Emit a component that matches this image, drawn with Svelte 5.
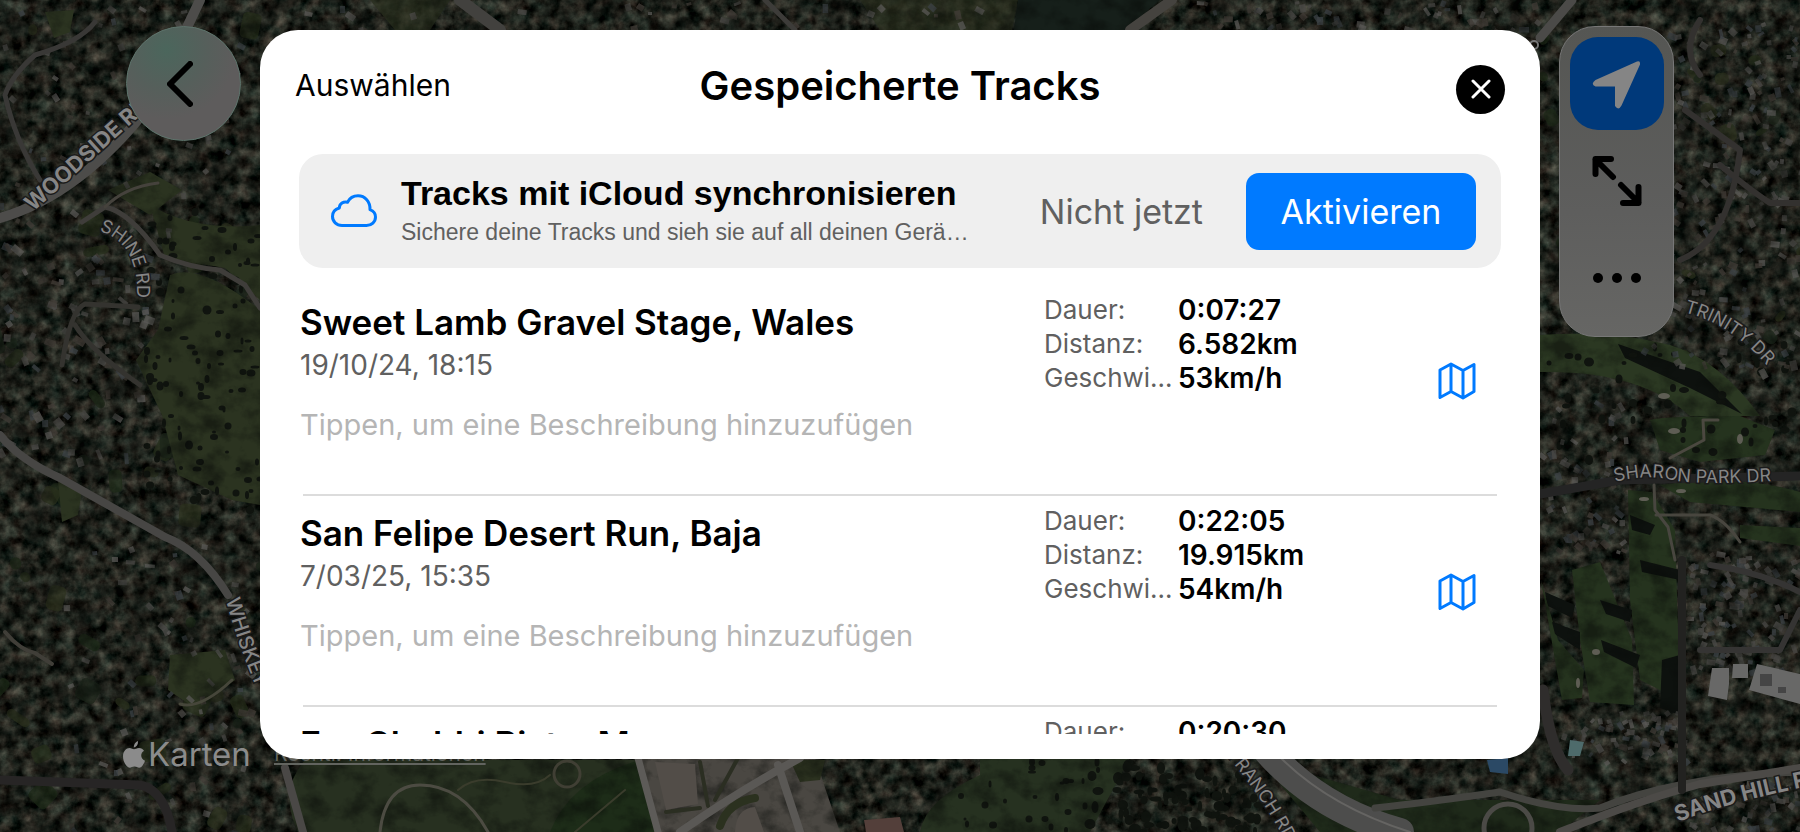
<script>
  const tracks = [
    { name: 'Sweet Lamb Gravel Stage, Wales', date: '19/10/24, 18:15', duration: '0:07:27', distance: '6.582km', speed: '53km/h' },
    { name: 'San Felipe Desert Run, Baja', date: '7/03/25, 15:35', duration: '0:22:05', distance: '19.915km', speed: '54km/h' },
    { name: 'Erg Chebbi Piste, Morocco', date: '2/04/25, 10:12', duration: '0:20:30', distance: '18.240km', speed: '53km/h' },
  ];

  let notes = $state(tracks.map(() => ''));

  // Small seeded generator, so the map looks the same on every load
  let seed = 41;
  function rand(min = 0, max = 1) {
    seed = (seed * 16807) % 2147483647;
    return min + (seed / 2147483647) * (max - min);
  }

  function scatter(count, x, y, w, h, min, max) {
    return Array.from({ length: count }, () => ({
      x: Math.round(rand(x, x + w)),
      y: Math.round(rand(y, y + h)),
      w: Math.round(rand(min, max)),
      h: Math.round(rand(min, max)),
      turn: Math.round(rand(0, 90)),
      tone: Math.floor(rand(0, 4)),
    }));
  }

  const roofs = ['#4b4947', '#5a5856', '#423c37', '#3c4145'];
  const lawns = ['#1d2a17', '#252e19', '#2b301d', '#1b2519'];

  const gardens = [...scatter(46, 0, 0, 260, 832, 8, 26), ...scatter(26, 1540, 0, 260, 400, 6, 18)];
  const houses = [
    ...scatter(60, 0, 0, 240, 240, 3, 9),
    ...scatter(85, 0, 240, 150, 220, 4, 12),
    ...scatter(70, 60, 540, 190, 292, 3, 10),
    ...scatter(30, 280, 0, 700, 28, 3, 10),
    ...scatter(50, 1180, 0, 360, 28, 3, 10),
    ...scatter(210, 1640, 20, 160, 350, 3, 10),
    ...scatter(60, 1540, 400, 90, 150, 3, 10),
    ...scatter(110, 1690, 550, 110, 120, 3, 10),
    ...scatter(80, 1560, 710, 130, 50, 3, 9),
    ...scatter(50, 1690, 780, 110, 52, 3, 9),
  ];
  const trees = [
    ...scatter(110, 145, 210, 115, 300, 3, 9),
    ...scatter(90, 1090, 762, 170, 70, 4, 12),
    ...scatter(24, 960, 762, 130, 70, 3, 8),
    ...scatter(50, 1545, 340, 250, 120, 4, 10),
  ];
</script>

<div class="page">
  <svg class="map" viewBox="0 0 1800 832" preserveAspectRatio="xMidYMid slice" aria-hidden="true">
    <defs>
      <filter id="canopy" x="0" y="0" width="100%" height="100%" color-interpolation-filters="sRGB">
        <feTurbulence type="fractalNoise" baseFrequency="0.08" numOctaves="4" seed="8" />
        <feColorMatrix values="0.5 0 0.1 0 -0.17  0.5 0 0 0 -0.11  0.45 0 0 0 -0.11  0 0 0 0 1" />
      </filter>
      <filter id="grain" x="0" y="0" width="100%" height="100%" color-interpolation-filters="sRGB">
        <feTurbulence type="fractalNoise" baseFrequency="0.04 0.05" numOctaves="5" seed="3" />
        <feColorMatrix values="0 0 0 0 0.03  0 0 0 0 0.04  0 0 0 0 0.03  2.6 0 0 0 -1.1" />
      </filter>
      <path id="woodside" d="M33 212 L150 107" />
      <path id="shine" d="M99 231 Q137 242 137 292" />
      <path id="whiskey" d="M226 600 Q236 640 262 702" />
      <path id="trinity" d="M1684 312 Q1735 325 1772 372" />
      <path id="sharon" d="M1615 482 Q1645 474 1672 480 T1790 480" />
      <path id="sandhill" d="M1678 822 Q1735 800 1825 783" />
      <path id="ranch" d="M1222 750 Q1262 795 1290 850" />
    </defs>

    <rect width="1800" height="832" filter="url(#canopy)" />

    <!-- lawns and open ground -->
    {#each gardens as g}
      <rect x={g.x} y={g.y} width={g.w} height={g.h} rx="5" fill={lawns[g.tone]} transform="rotate({g.turn} {g.x} {g.y})" opacity="0.7" />
    {/each}
    <g fill="#2b3320">
      <path d="M150 205 Q195 232 260 225 V300 L225 268 L165 258 Z" />
      <path d="M170 275 Q200 262 260 310 V505 L232 500 L178 475 L162 415 L136 360 L158 330 Z" />
      <path d="M108 190 L150 172 L182 190 L150 215 Z" />
      <path d="M58 480 L82 490 L78 515 L62 522 Z" />
      <path d="M45 12 L74 10 L70 32 L54 38 Z" />
      <path d="M170 655 L225 650 L235 680 L195 708 L168 690 Z" />
    </g>
    <path d="M305 760 H640 L665 832 H298 Q278 790 305 760 Z" fill="#273020" />
    <path d="M550 832 Q570 780 640 760 L658 832 Z" fill="#1d2c18" />
    <path d="M640 758 H815 L840 832 H655 Z" fill="#4a4742" />
    <path d="M790 760 H825 L820 780 L800 782 Z" fill="#2b311f" />
    <path d="M980 758 H1130 L1090 832 H920 Q925 800 980 775 Z" fill="#263120" />
    <path d="M370 0 H450 L430 30 H395 Z M860 0 H1018 L1012 30 H880 Z" fill="#2a2f1e" opacity="0.7" />
    <path d="M1018 0 H1160 L1125 30 H1014 Z" fill="#161f1a" />
    <path d="M1260 760 L1400 800 H1600 L1560 832 H1320 Z" fill="#1f2a1a" />
    <path d="M1540 335 Q1610 330 1670 345 Q1720 360 1760 416 H1690 Q1640 370 1540 372 Z" fill="#2b3822" />
    <g fill="#25331e">
      <path d="M1650 420 Q1665 416 1740 416 L1775 430 L1765 455 L1700 462 L1660 450 Z" />
      <path d="M1660 485 Q1740 474 1800 492 V512 L1690 502 Z" />
      <path d="M1740 525 L1800 528 V546 L1740 538 Z" />
      <path d="M1628 490 L1652 492 L1675 530 L1680 700 L1640 680 L1630 600 Z" />
      <path d="M1572 570 L1600 562 L1632 640 L1634 705 L1590 702 L1580 640 Z" />
      <path d="M1541 580 L1558 640 L1584 670 L1582 698 L1562 700 Z" />
    </g>
    <g fill="#0d110e">
      <path d="M1618 344 L1700 372 L1742 414 L1690 388 L1625 358 Z" />
      <path d="M1600 600 L1632 610 L1630 622 L1606 614 Z" />
      <path d="M1601 640 L1640 655 L1636 668 L1604 652 Z" />
      <path d="M1630 515 L1655 525 L1650 535 L1632 530 Z" />
      <path d="M1640 560 L1680 570 L1680 580 L1642 572 Z" />
      <path d="M1662 660 L1680 655 L1680 715 L1660 708 Z" />
      <path d="M1545 592 L1575 605 L1572 618 L1548 606 Z" />
      <path d="M1552 622 L1580 632 L1580 650 L1555 634 Z" />
    </g>
    {#each trees as t}
      <ellipse cx={t.x} cy={t.y} rx={t.w / 2} ry={t.h / 2} fill="#10140f" />
    {/each}

    {#each houses as h}
      <rect x={h.x} y={h.y} width={h.w} height={h.h / 2 + 2} fill={roofs[h.tone]} transform="rotate({h.turn} {h.x} {h.y})" opacity="0.75" />
    {/each}
    <rect width="1800" height="832" filter="url(#grain)" opacity="0.5" />

    <!-- roads -->
    <g fill="none" stroke-linecap="round" stroke-linejoin="round">
      <path d="M0 218 Q80 195 150 105 L200 0" stroke="#4d4c4a" stroke-width="10" />
      <path d="M5 95 Q12 75 35 55 Q80 42 95 22 M5 95 Q15 140 40 180" stroke="#393836" stroke-width="5" />
      <path d="M82 222 L105 207 Q130 212 160 255 Q190 268 220 270 L245 285 L260 308" stroke="#3f3d3a" stroke-width="5" />
      <path d="M105 207 Q125 187 158 183" stroke="#45423c" stroke-width="3" />
      <path d="M62 365 Q70 310 85 304 L138 307 M75 325 Q90 350 140 385" stroke="#34332f" stroke-width="5" />
      <path d="M0 435 Q20 460 60 478 L165 537 Q200 550 228 595" stroke="#474644" stroke-width="8" />
      <path d="M5 632 Q20 650 35 653 L52 664" stroke="#403e38" stroke-width="4" />
      <path d="M0 780 L140 785 Q165 790 172 832" stroke="#272525" stroke-width="9" />
      <path d="M232 680 Q200 710 180 704" stroke="#46463a" stroke-width="3" />
      <path d="M285 768 L303 832" stroke="#4a4846" stroke-width="8" />
      <path d="M380 832 Q385 785 420 785 Q462 785 488 832" stroke="#4c4b42" stroke-width="3" />
      <path d="M458 790 Q475 775 505 782 T550 775 M575 832 L625 790" stroke="#3a3c2c" stroke-width="2" />
      <circle cx="567" cy="774" r="13" stroke="#403f34" stroke-width="3" />
      <path d="M638 758 L658 832" stroke="#5d5b58" stroke-width="7" />
      <path d="M666 812 L700 808 M700 762 L708 806 M715 800 L738 758" stroke="#2b2e22" stroke-width="4" />
      <path d="M680 832 Q740 790 800 758 M778 765 L800 832" stroke="#5a5855" stroke-width="8" />
      <path d="M720 826 Q728 802 755 798" stroke="#2b311f" stroke-width="8" />
      <path d="M460 0 L500 30" stroke="#42413e" stroke-width="12" />
      <path d="M765 0 L795 30" stroke="#3d3c39" stroke-width="5" />
      <path d="M1172 0 L1130 30" stroke="#45433f" stroke-width="10" />
      <path d="M1268 752 Q1320 810 1400 832" stroke="#4d4d4c" stroke-width="28" />
      <path d="M1275 752 Q1325 805 1410 832" stroke="#656462" stroke-width="2" />
      <path d="M1375 808 Q1430 802 1500 792 Q1560 812 1600 808 Q1680 776 1800 772" stroke="#444440" stroke-width="7" />
      <path d="M1560 832 Q1640 800 1700 784 L1800 768" stroke="#4c4a47" stroke-width="8" />
      <circle cx="1508" cy="828" r="24" stroke="#4b4a46" stroke-width="5" />
      <path d="M1540 38 L1572 0" stroke="#4b4a48" stroke-width="9" />
      <path d="M1540 494 L1620 480 L1800 476" stroke="#242424" stroke-width="9" />
      <path d="M1654 485 L1655 510 L1668 527 L1675 560 M1656 515 H1710 Q1725 520 1740 542" stroke="#48463f" stroke-width="3" />
      <path d="M1703 420 L1704 440 L1670 458 M1704 420 H1718" stroke="#4b4840" stroke-width="3" />
      <path d="M1543 690 Q1550 750 1568 770" stroke="#2f2d2c" stroke-width="11" />
      <path d="M1682 560 V790" stroke="#222220" stroke-width="8" />
      <path d="M1700 20 Q1680 50 1700 75 M1685 110 L1740 150 Q1730 240 1680 260 M1720 165 Q1750 190 1770 203 H1800" stroke="#33312f" stroke-width="6" />
      <path d="M1710 565 Q1760 572 1800 592 M1700 650 H1780 L1800 610" stroke="#353433" stroke-width="6" />
    </g>
    <circle cx="1534" cy="45" r="4" fill="none" stroke="#777" stroke-width="2" />

    <!-- large roofs, courts and bunkers -->
    <path d="M1712 668 L1729 668 V684 L1727 700 L1708 696 Z M1733 664 H1748 V678 H1732 Z M1757 664 L1800 674 V704 L1749 690 Z" fill="#686867" />
    <path d="M1760 674 h12 v12 h-12 z M1778 687 h8 v6 h-8 z" fill="#454545" />
    <path d="M655 762 L695 764 L698 804 L666 810 Z M735 832 Q736 808 755 807 L764 832 Z" fill="#524d48" />
    <path d="M864 820 L900 817 L904 832 H866 Z" fill="#533f3a" />
    <path d="M1487 760 L1508 758 V774 L1490 772 Z" fill="#2b4965" />
    <path d="M1570 740 L1584 742 L1580 756 H1568 Z" fill="#4e6b6b" />
    <g fill="#5e5d54">
      <ellipse cx="1664" cy="396" rx="6" ry="3" />
      <ellipse cx="1674" cy="431" rx="6" ry="3" />
      <ellipse cx="1681" cy="491" rx="5" ry="2" />
      <ellipse cx="1644" cy="499" rx="5" ry="2" />
      <ellipse cx="1596" cy="652" rx="4" ry="3" />
      <ellipse cx="1578" cy="683" rx="2" ry="5" />
      <ellipse cx="1740" cy="439" rx="3" ry="5" />
    </g>

    <g class="label">
      <text class="bold"><textPath href="#woodside">WOODSIDE RD</textPath></text>
      <text><textPath href="#shine">SHINE RD</textPath></text>
      <text class="medium"><textPath href="#whiskey">WHISKEY</textPath></text>
      <text><textPath href="#trinity">TRINITY DR</textPath></text>
      <text><textPath href="#sharon">SHARON PARK DR</textPath></text>
      <text class="bold"><textPath href="#sandhill">SAND HILL RD</textPath></text>
      <text><textPath href="#ranch">N RANCH RD</textPath></text>
    </g>
  </svg>

  <div class="attribution">
    <svg class="apple" viewBox="0 0 22 27" aria-hidden="true">
      <path d="M15 0 Q15.400 5 10.800 6.600 Q10.600 1.800 15 0 Z M11 8.300 C12.500 8.300 13.600 7 16 7 C18.300 7 20.100 8.300 21 9.700 C16.800 12.200 17.500 18 22 19.700 C21 22.800 18.700 26.700 16.300 26.700 C14.300 26.700 13.700 25.500 11.500 25.500 C9.200 25.500 8.500 26.700 6.700 26.700 C3.800 26.700 0 21 0 15.500 C0 10 3.300 7 6.500 7 C8.600 7 9.800 8.300 11 8.300 Z" />
    </svg>
    <span class="brand">Karten</span>
    <a href="#legal">Rechtl. Informationen</a>
  </div>

  <nav class="side left">
    <button class="back" aria-label="Zurück">
      <svg viewBox="0 0 26 46" width="26" height="46"><path d="M23 3 L3 23 L23 43" /></svg>
    </button>
  </nav>

  <main class="sheet">
    <header>
      <button class="select">Auswählen</button>
      <h1>Gespeicherte Tracks</h1>
      <button class="close" aria-label="Schließen">
        <svg viewBox="0 0 20 20" width="20" height="20"><path d="M2 2 L18 18 M18 2 L2 18" /></svg>
      </button>
    </header>

    <section class="sync">
      <svg class="cloud" viewBox="0 0 46 34" width="46" height="34" aria-hidden="true">
        <path d="M11 31.500 H35.500 C40.500 31.500 44.500 27.800 44.500 23 C44.500 19.500 42.300 16.800 39 15.600 C39.300 7.500 34 1.800 27 1.800 C22 1.800 18.500 4.300 16.500 8.200 C12.500 7 8.500 9.800 8.300 14 C4 15.200 1.500 18.500 1.500 22.500 C1.500 27.500 5.500 31.500 11 31.500 Z" />
      </svg>
      <div class="sync-text">
        <h2>Tracks mit iCloud synchronisieren</h2>
        <p>Sichere deine Tracks und sieh sie auf all deinen Gerä…</p>
      </div>
      <button class="later">Nicht jetzt</button>
      <button class="activate">Aktivieren</button>
    </section>

    <ul class="tracks">
      {#each tracks as track, i}
        <li>
          <div class="info">
            <h3>{track.name}</h3>
            <time>{track.date}</time>
            <input type="text" aria-label="Beschreibung" placeholder="Tippen, um eine Beschreibung hinzuzufügen" bind:value={notes[i]} />
          </div>
          <dl>
            <dt>Dauer:</dt>
            <dd>{track.duration}</dd>
            <dt>Distanz:</dt>
            <dd>{track.distance}</dd>
            <dt>Geschwi…</dt>
            <dd>{track.speed}</dd>
          </dl>
          <button class="show" aria-label="Auf Karte zeigen">
            <svg viewBox="0 0 38 38" width="38" height="38">
              <path d="M2 8 L13 2 L25 8.500 L36 2.500 V29.500 L25 36 L13 29.500 L2 35.500 Z M13 2 V29.500 M25 8.500 V36" />
            </svg>
          </button>
        </li>
      {/each}
    </ul>
  </main>

  <nav class="side right">
    <div class="tools">
      <button class="locate" aria-label="Mein Standort">
        <svg viewBox="0 0 52 52" width="52" height="52">
          <path d="M4.500 22 L46 3.500 Q49.500 2 49 6.500 L30.500 47.500 Q27.500 53 24 48 V28.500 H4.500 Q-1 26 4.500 22 Z" />
        </svg>
      </button>
      <button aria-label="Vollbild">
        <svg class="stroked" viewBox="0 0 50 50" width="50" height="50">
          <path d="M21 21 L3.500 3.500 M3.500 18 V3 H19 M29 29 L46.500 46.500 M46.500 31 V47 H31" />
        </svg>
      </button>
      <button aria-label="Mehr">
        <svg viewBox="0 0 48 12" width="48" height="12">
          <circle cx="5" cy="6" r="5" />
          <circle cx="24" cy="6" r="5" />
          <circle cx="43" cy="6" r="5" />
        </svg>
      </button>
    </div>
  </nav>
</div>

<style>
  :global(body) {
    margin: 0;
    background: #151715;
  }

  .page {
    position: relative;
    display: flex;
    box-sizing: border-box;
    height: 100vh;
    padding: 30px 0 73px;
    overflow: hidden;
    font-family: Inter, "Liberation Sans", sans-serif;
    color: #000;
  }

  button {
    padding: 0;
    border: 0;
    background: none;
    font: inherit;
    color: inherit;
    cursor: pointer;
  }

  svg {
    display: block;
    flex: none;
  }

  h1,
  h2,
  h3,
  p,
  ul,
  dl,
  dd {
    margin: 0;
    padding: 0;
  }

  .map {
    position: absolute;
    inset: 0;
    width: 100%;
    height: 100%;
  }

  .label {
    font-size: 18px;
    fill: #858585;
    stroke: #1b1b1b;
    stroke-width: 3px;
    paint-order: stroke;
  }

  .label .medium {
    font-size: 20px;
    font-weight: 500;
  }

  .label .bold {
    font-size: 22px;
    font-weight: 700;
  }

  .attribution {
    position: absolute;
    left: 123px;
    bottom: 57px;
    display: flex;
    align-items: center;
    line-height: 42px;
    color: #8b8b8b;
  }

  .apple {
    width: 22px;
    height: 27px;
    margin-right: 3px;
    fill: #8b8b8b;
  }

  .brand {
    width: 126px;
    font-size: 33px;
  }

  .attribution a {
    font-size: 21px;
    color: #62645f;
  }

  .side {
    position: relative;
    display: flex;
    flex: 0 0 260px;
    align-items: flex-start;
    box-sizing: border-box;
    margin-top: -4px;
    padding: 0 19px;
  }

  .left {
    justify-content: flex-end;
  }

  .back {
    display: grid;
    place-items: center;
    width: 115px;
    height: 115px;
    box-sizing: border-box;
    border: 1px solid #5d736b;
    border-radius: 50%;
    background: radial-gradient(circle at 35% 20%, #4b665c 0, #565f5b 35%, #5e5c5c 60%);
  }

  .back svg {
    margin-right: 8px;
    fill: none;
    stroke: #000;
    stroke-width: 6;
    stroke-linecap: round;
    stroke-linejoin: round;
  }

  .tools {
    display: flex;
    flex-direction: column;
    align-items: center;
    gap: 4px;
    box-sizing: border-box;
    width: 115px;
    height: 311px;
    padding-top: 10px;
    border: 1px solid #777;
    border-radius: 36px;
    background: linear-gradient(#555653, #5e5e5d 60%, #666664);
  }

  .tools button {
    display: grid;
    place-items: center;
    width: 94px;
    height: 93px;
    border-radius: 28px;
  }

  .tools .locate {
    background: #00397a;
    fill: #858585;
  }

  .stroked {
    fill: none;
    stroke: #000;
    stroke-width: 6;
    stroke-linecap: round;
    stroke-linejoin: round;
  }

  .sheet {
    position: relative;
    display: flex;
    flex: 1;
    flex-direction: column;
    box-sizing: border-box;
    min-width: 0;
    padding: 0 39px 25px;
    border-radius: 38px;
    background: #fff;
  }

  header {
    display: grid;
    grid-template-columns: 1fr auto 1fr;
    align-items: center;
    height: 118px;
    margin: 0 -4px 6px;
  }

  .select {
    justify-self: start;
    padding-bottom: 8px;
    font-size: 30px;
  }

  h1 {
    padding-bottom: 8px;
    font-size: 40px;
    font-weight: 600;
  }

  .close {
    display: grid;
    place-items: center;
    justify-self: end;
    width: 49px;
    height: 49px;
    border-radius: 50%;
    background: #000;
  }

  .close svg {
    stroke: #fff;
    stroke-width: 3;
    stroke-linecap: round;
  }

  .sync {
    display: flex;
    flex: none;
    align-items: center;
    box-sizing: border-box;
    height: 114px;
    padding: 0 25px 0 32px;
    border-radius: 24px;
    background: #efefef;
  }

  .cloud {
    fill: none;
    stroke: #007aff;
    stroke-width: 3;
    stroke-linejoin: round;
  }

  .sync-text {
    flex: 1;
    min-width: 0;
    margin: 0 40px 0 24px;
    font-family: "Liberation Sans", Arial, sans-serif;
  }

  h2 {
    font-size: 34px;
    line-height: 42px;
    font-weight: 700;
    white-space: nowrap;
  }

  .sync-text p {
    font-size: 23px;
    line-height: 36px;
    color: #606060;
    white-space: nowrap;
  }

  .later,
  .activate {
    font-size: 34px;
    white-space: nowrap;
  }

  .later {
    color: #606060;
  }

  .activate {
    width: 230px;
    height: 77px;
    margin-left: 43px;
    border-radius: 13px;
    background: #007aff;
    color: #fff;
  }

  .tracks {
    flex: 1;
    min-height: 0;
    margin-top: 17px;
    overflow: hidden;
    list-style: none;
  }

  li {
    display: flex;
    align-items: flex-start;
    box-sizing: border-box;
    height: 211px;
    margin: 0 4px;
    padding-top: 8px;
    border-bottom: 2px solid #dcdcdc;
  }

  .info {
    display: flex;
    flex: 1;
    flex-direction: column;
    min-width: 0;
    margin-left: -3px;
    padding-top: 7px;
  }

  h3 {
    font-size: 35px;
    line-height: 44px;
    font-weight: 600;
  }

  time {
    padding-top: 3px;
    font-size: 28px;
    line-height: 36px;
    color: #606060;
  }

  input {
    height: 36px;
    margin-top: 23px;
    padding: 0;
    border: 0;
    outline: none;
    background: none;
    font: inherit;
    font-size: 29px;
  }

  input::placeholder {
    color: #b5b5b5;
    opacity: 1;
  }

  dl {
    display: grid;
    grid-template-columns: 130px 1fr;
    column-gap: 4px;
    width: 394px;
    font-size: 28px;
    line-height: 34px;
  }

  dt {
    font-size: 26px;
    color: #606060;
    white-space: nowrap;
  }

  dd {
    font-weight: 600;
  }

  .show {
    margin: 69px 21px 0 0;
  }

  .show svg {
    fill: none;
    stroke: #007aff;
    stroke-width: 3;
    stroke-linejoin: round;
  }
</style>
